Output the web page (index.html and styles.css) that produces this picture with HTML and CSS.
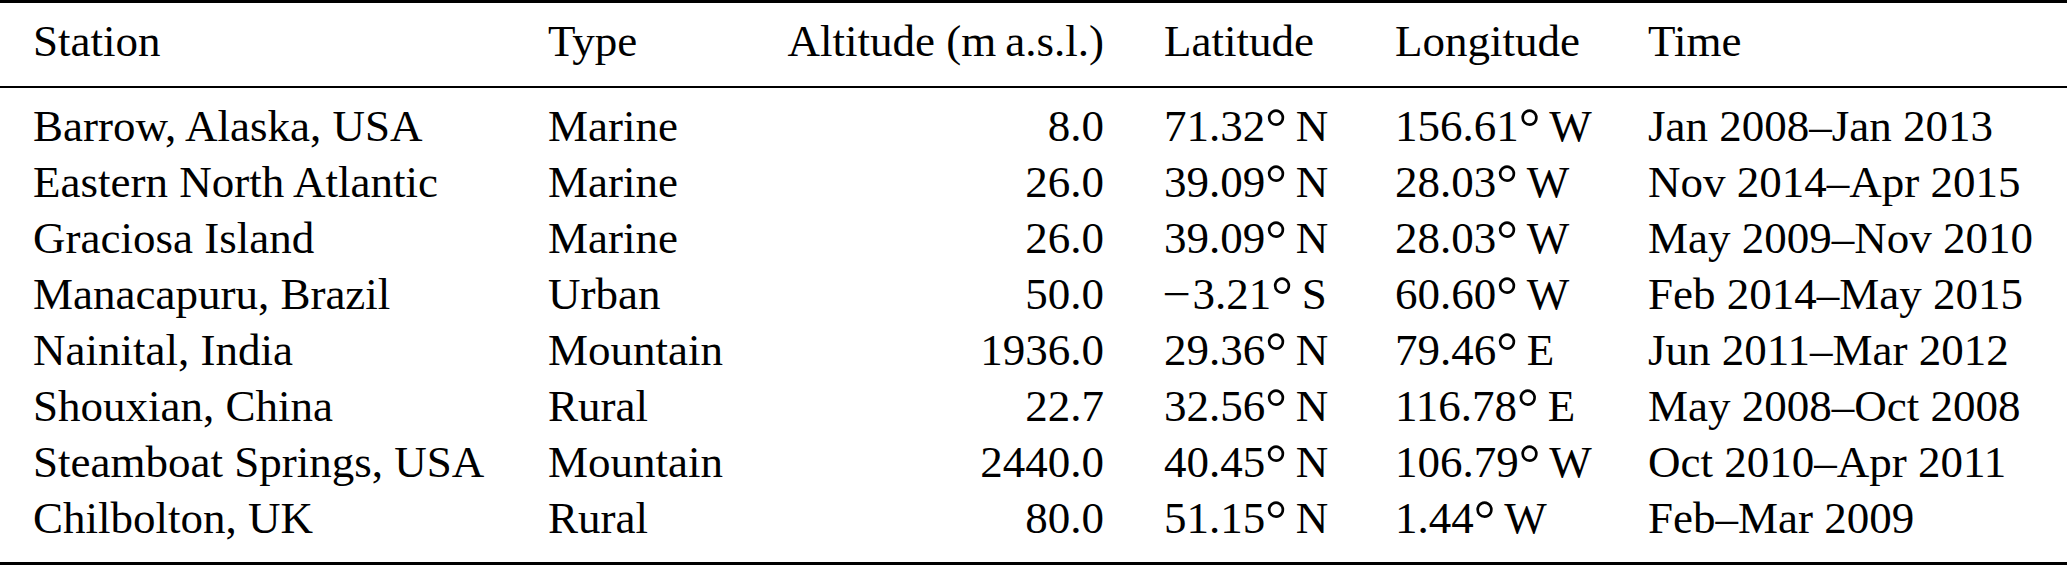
FILE: index.html
```html
<!DOCTYPE html>
<html lang="en">
<head>
<meta charset="utf-8">
<title>Stations</title>
<link rel="stylesheet" href="styles.css">
</head>
<body>
<div class="table">
  <div class="row head">
    <div>Station</div><div>Type</div><div class="num">Altitude (m&#8201;a.s.l.)</div><div>Latitude</div><div>Longitude</div><div>Time</div>
  </div>
  <div class="body">
    <div class="row"><div>Barrow, Alaska, USA</div><div>Marine</div><div class="num">8.0</div><div>71.32<span class="deg">°</span>&#8201;N</div><div>156.61<span class="deg">°</span>&#8201;W</div><div>Jan 2008–Jan 2013</div></div>
    <div class="row"><div>Eastern North Atlantic</div><div>Marine</div><div class="num">26.0</div><div>39.09<span class="deg">°</span>&#8201;N</div><div>28.03<span class="deg">°</span>&#8201;W</div><div>Nov 2014–Apr 2015</div></div>
    <div class="row"><div>Graciosa Island</div><div>Marine</div><div class="num">26.0</div><div>39.09<span class="deg">°</span>&#8201;N</div><div>28.03<span class="deg">°</span>&#8201;W</div><div>May 2009–Nov 2010</div></div>
    <div class="row"><div>Manacapuru, Brazil</div><div>Urban</div><div class="num">50.0</div><div><span class="minus">−</span>3.21<span class="deg">°</span>&#8201;S</div><div>60.60<span class="deg">°</span>&#8201;W</div><div>Feb 2014–May 2015</div></div>
    <div class="row"><div>Nainital, India</div><div>Mountain</div><div class="num">1936.0</div><div>29.36<span class="deg">°</span>&#8201;N</div><div>79.46<span class="deg">°</span>&#8201;E</div><div>Jun 2011–Mar 2012</div></div>
    <div class="row"><div>Shouxian, China</div><div>Rural</div><div class="num">22.7</div><div>32.56<span class="deg">°</span>&#8201;N</div><div>116.78<span class="deg">°</span>&#8201;E</div><div>May 2008–Oct 2008</div></div>
    <div class="row"><div>Steamboat Springs, USA</div><div>Mountain</div><div class="num">2440.0</div><div>40.45<span class="deg">°</span>&#8201;N</div><div>106.79<span class="deg">°</span>&#8201;W</div><div>Oct 2010–Apr 2011</div></div>
    <div class="row"><div>Chilbolton, UK</div><div>Rural</div><div class="num">80.0</div><div>51.15<span class="deg">°</span>&#8201;N</div><div>1.44<span class="deg">°</span>&#8201;W</div><div>Feb–Mar 2009</div></div>
  </div>
</div>
</body>
</html>
```
FILE: styles.css
```css
html, body {
  margin: 0;
  padding: 0;
  background: #fff;
}
body {
  font-family: "Liberation Serif", "Times New Roman", serif;
  font-size: 45px;
  color: #000;
  width: 2067px;
  height: 565px;
  overflow: hidden;
}
.table {
  border-top: 3px solid #000;
  border-bottom: 3px solid #000;
}
.head {
  padding-top: 10px;
  padding-bottom: 17px;
  border-bottom: 2px solid #000;
}
.body {
  padding-top: 10px;
  padding-bottom: 16px;
}
.row {
  display: grid;
  grid-template-columns: 515px 235px 321px 291px 253px 1fr;
  padding-left: 33px;
  line-height: 56px;
  white-space: nowrap;
}
.row > div:nth-child(4) {
  padding-left: 60px;
}
.num {
  text-align: right;
}
.deg {
  font-size: 54px;
  line-height: 0;
  vertical-align: -5px;
}
.minus {
  display: inline-block;
  transform: scaleX(1.12);
  margin-right: 3px;
}
```
